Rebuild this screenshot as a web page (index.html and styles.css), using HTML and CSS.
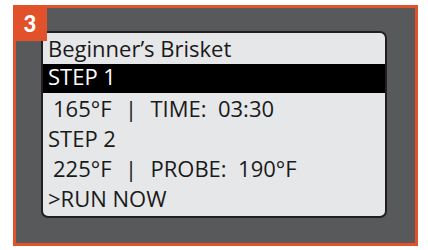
FILE: index.html
```html
<!DOCTYPE html>
<html>
<head>
<meta charset="utf-8">
<link rel="stylesheet" href="styles.css">
</head>
<body>
<div class="frame">
  <div class="badge">3</div>
  <div class="panel">
    <div class="row title">Beginner’s Brisket</div>
    <div class="row selected">STEP 1</div>
    <div class="row indent">165°F  <span class="sep">|</span>  TIME:  03:30</div>
    <div class="row">STEP 2</div>
    <div class="row indent">225°F  <span class="sep">|</span>  PROBE:  190°F</div>
    <div class="row">&gt;RUN NOW</div>
  </div>
</div>
</body>
</html>
```
FILE: styles.css
```css
html, body {
  margin: 0;
  padding: 0;
  background: #ffffff;
}
body {
  width: 428px;
  height: 250px;
  overflow: hidden;
}
.frame {
  position: relative;
  box-sizing: border-box;
  margin: 5px 0 0 13px;
  width: 405px;
  height: 241px;
  border: 3px solid #e2522a;
  background: #58595b;
  padding: 23px 0 0 25px;
}
.badge {
  position: absolute;
  left: -3px;
  top: -3px;
  width: 34px;
  height: 36px;
  background: #e2522a;
  color: #ffffff;
  font-family: Lato, "DejaVu Sans", sans-serif;
  font-weight: 900;
  font-size: 22px;
  line-height: 37px;
  text-align: center;
}
.panel {
  box-sizing: border-box;
  width: 346px;
  height: 187px;
  background: #e6e7e8;
  border: 2px solid #231f20;
  border-radius: 7px;
  overflow: hidden;
  font-family: "Open Sans", "Noto Sans", sans-serif;
  font-size: 22px;
  color: #1a1a1a;
}
.row {
  height: 30px;
  line-height: 30px;
  padding-left: 5px;
  white-space: pre;
}
.title {
  height: 31px;
  line-height: 31px;
}
.selected {
  height: 29px;
  line-height: 25px;
  background: #000000;
  color: #ffffff;
}
.indent {
  padding-left: 10px;
}
.sep {
  margin: 0 2px;
}
```
